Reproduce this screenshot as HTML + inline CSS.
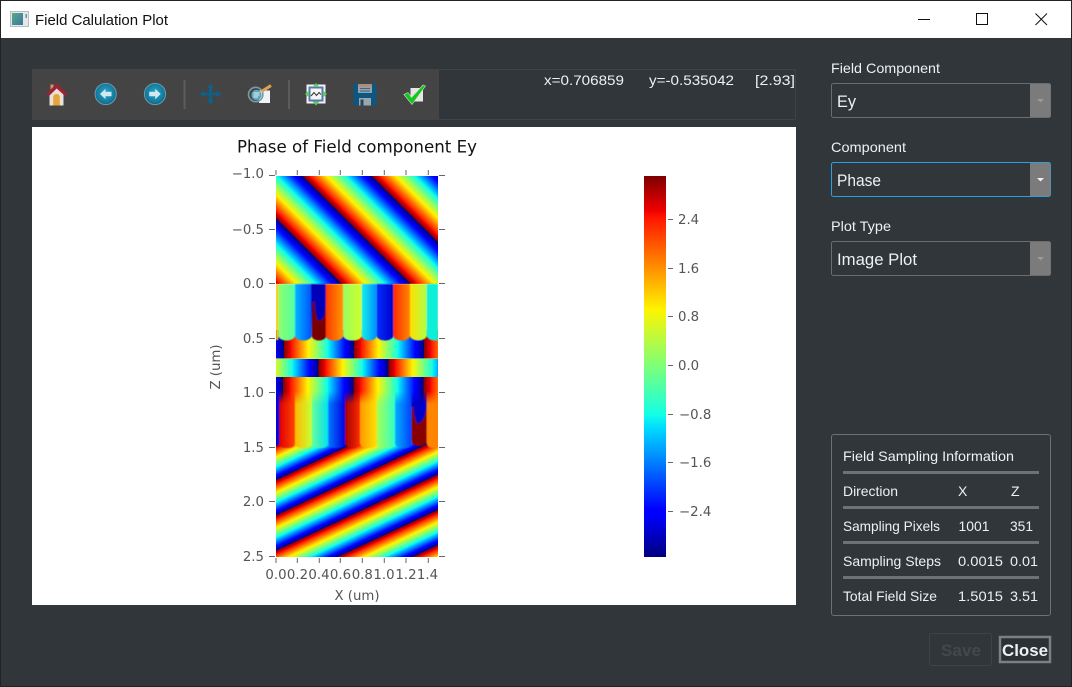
<!DOCTYPE html>
<html><head><meta charset="utf-8"><title>Field Calulation Plot</title>
<style>html,body{margin:0;padding:0;background:#31363b;overflow:hidden}svg{display:block}
.s{font-family:"Liberation Sans",sans-serif;fill:#eff0f1;font-size:14px}
.c{font-family:"Liberation Sans",sans-serif;fill:#eff0f1;font-size:16.5px}
</style></head><body>
<svg width="1072" height="687" viewBox="0 0 1072 687" xmlns="http://www.w3.org/2000/svg">
<defs>
<linearGradient id="jet" gradientUnits="userSpaceOnUse" spreadMethod="repeat" x1="0" y1="0" x2="70" y2="0">
<stop offset="0" stop-color="#7f0000"/><stop offset=".09" stop-color="#ee0000"/><stop offset=".11" stop-color="#ff1600"/><stop offset=".35" stop-color="#fff400"/><stop offset=".5" stop-color="#7cff79"/><stop offset=".625" stop-color="#14ffe5"/><stop offset=".66" stop-color="#00dcff"/><stop offset=".875" stop-color="#0000ff"/><stop offset=".89" stop-color="#0000ff"/><stop offset="1" stop-color="#00007f"/>
</linearGradient>
<linearGradient id="gTop" href="#jet" x1="302.7" y1="176" x2="337.2" y2="141.5"/>
<linearGradient id="gBot" href="#jet" x1="338.3" y1="556.7" x2="351.9" y2="585.6"/>
<linearGradient id="gB1" href="#jet" x1="284" y1="0" x2="354" y2="0"/>
<linearGradient id="gB2" href="#jet" x1="318.3" y1="0" x2="388.3" y2="0"/>
<linearGradient id="gB3" href="#jet" x1="283" y1="0" x2="353.3" y2="0"/>
<linearGradient id="gCb" href="#jet" spreadMethod="pad" x1="0" y1="176" x2="0" y2="557"/>
<linearGradient id="a1"><stop offset="0" stop-color="#90ff68"/><stop offset="1" stop-color="#50ffa8"/></linearGradient>
<linearGradient id="a2"><stop offset="0" stop-color="#00b8ff"/><stop offset="1" stop-color="#0050ff"/></linearGradient>
<linearGradient id="a4"><stop offset="0" stop-color="#ff3800"/><stop offset="1" stop-color="#ff9800"/></linearGradient>
<linearGradient id="a5"><stop offset="0" stop-color="#98ff60"/><stop offset="1" stop-color="#d0ff28"/></linearGradient>
<linearGradient id="a6"><stop offset="0" stop-color="#10f0e8"/><stop offset="1" stop-color="#0090ff"/></linearGradient>
<linearGradient id="a7"><stop offset="0" stop-color="#0030ff"/><stop offset="1" stop-color="#0000c8"/></linearGradient>
<linearGradient id="a8"><stop offset="0" stop-color="#ff2800"/><stop offset="1" stop-color="#ff8800"/></linearGradient>
<linearGradient id="a9"><stop offset="0" stop-color="#ffe000"/><stop offset="1" stop-color="#b0ff48"/></linearGradient>
<linearGradient id="b1"><stop offset="0" stop-color="#e00000"/><stop offset="1" stop-color="#ff4400"/></linearGradient>
<linearGradient id="b2"><stop offset="0" stop-color="#ffb800"/><stop offset="1" stop-color="#c8ff30"/></linearGradient>
<linearGradient id="b3"><stop offset="0" stop-color="#68ff98"/><stop offset="1" stop-color="#00e0f0"/></linearGradient>
<linearGradient id="b4"><stop offset="0" stop-color="#0078ff"/><stop offset="1" stop-color="#0000e0"/></linearGradient>
<linearGradient id="b5"><stop offset="0" stop-color="#a00000"/><stop offset="1" stop-color="#ff2c00"/></linearGradient>
<linearGradient id="b6"><stop offset="0" stop-color="#ff9800"/><stop offset="1" stop-color="#ffe000"/></linearGradient>
<linearGradient id="b7"><stop offset="0" stop-color="#a8ff50"/><stop offset="1" stop-color="#30ffc8"/></linearGradient>
<linearGradient id="b8"><stop offset="0" stop-color="#00b0ff"/><stop offset="1" stop-color="#0040ff"/></linearGradient>
<radialGradient id="ball" cx=".5" cy=".45" r=".55"><stop offset="0" stop-color="#2aa8c8"/><stop offset=".8" stop-color="#12799c"/><stop offset="1" stop-color="#0c6080"/></radialGradient>
<linearGradient id="ti" x1="0" y1="0" x2="1" y2="1"><stop offset="0" stop-color="#58a88a"/><stop offset="1" stop-color="#3a78a0"/></linearGradient>
<linearGradient id="fade" gradientUnits="userSpaceOnUse" x1="0" y1="391" x2="0" y2="404"><stop offset="0" stop-color="#000"/><stop offset="1" stop-color="#fff"/></linearGradient>
<mask id="mLow" maskUnits="userSpaceOnUse" x="270" y="380" width="175" height="80"><rect x="270" y="380" width="175" height="80" fill="url(#fade)"/></mask>
<clipPath id="im"><rect x="276" y="176" width="162" height="381"/></clipPath>
<clipPath id="cTop"><rect x="276" y="284" width="162" height="60"/></clipPath>
<filter id="bl" x="-5%" y="-5%" width="110%" height="110%"><feGaussianBlur stdDeviation="0.5"/></filter>
</defs>

<!-- window -->
<rect width="1072" height="687" fill="#31363b"/>
<rect x="0" y="1" width="1072" height="37" fill="#fff"/>
<rect x="0" y="0" width="1072" height="1" fill="#222"/>
<rect x="0" y="0" width="1" height="687" fill="#222"/>
<rect x="1071" y="0" width="1" height="687" fill="#222"/>
<rect x="0" y="686" width="1072" height="1" fill="#222"/>
<rect x="10.5" y="11.5" width="18" height="15" fill="#e4e8e8" stroke="#b8bec0"/>
<rect x="12" y="13" width="11" height="12" fill="url(#ti)"/>
<rect x="25.5" y="14" width="1.5" height="4" fill="#5a9aa0"/>
<text x="35" y="25" font-family="Liberation Sans,sans-serif" font-size="14.5" fill="#111" textLength="133" lengthAdjust="spacingAndGlyphs">Field Calulation Plot</text>
<path d="M918 19.5H930" stroke="#111" stroke-width="1"/>
<rect x="976.5" y="13.5" width="11" height="11" fill="none" stroke="#111"/>
<path d="M1035.5 13.5L1047 25M1047 13.5L1035.5 25" stroke="#111" stroke-width="1" fill="none"/>

<!-- toolbar -->
<rect x="32.5" y="69.5" width="763" height="50" fill="#31363b" stroke="#3e4347" rx="1"/>
<rect x="32" y="69" width="407" height="51" fill="#444"/>
<rect x="183.5" y="80" width="2" height="29" fill="#5c5c5c"/>
<rect x="288" y="80" width="2" height="29" fill="#5c5c5c"/>

<!-- home -->
<path d="M50.5 90V84.5H53.5V90Z" fill="#d89a50"/>
<path d="M49.5 93V105.5H63.5V93L56.5 86.5Z" fill="#e8e2d6"/>
<path d="M53.2 105.5V97.5Q53.2 94 56.5 94Q59.8 94 59.8 97.5V105.5Z" fill="#e5a53c"/>
<path d="M46 94.5L56.7 83.3L68 94.5L64.5 95.5L56.7 88.5L49.5 95.5Z" fill="#9c2238"/>
<!-- back/forward -->
<circle cx="105.7" cy="94" r="10.6" fill="url(#ball)" stroke="#6f9aa8" stroke-width="1"/>
<path d="M100 94L105.5 88.7V91.7H111.5V96.3H105.5V99.3Z" fill="#cfe8f2"/>
<circle cx="155" cy="94" r="10.6" fill="url(#ball)" stroke="#6f9aa8" stroke-width="1"/>
<path d="M160.7 94L155.2 88.7V91.7H149.2V96.3H155.2V99.3Z" fill="#cfe8f2"/>
<!-- move -->
<path d="M210.5 83.5L214 88H212V92.7H216.5V90.5L221 94L216.5 97.5V95.3H212V100H214L210.5 104.5L207 100H209V95.3H204.5V97.5L200 94L204.5 90.5V92.7H209V88H207Z" fill="#0f6088"/>
<!-- options -->
<rect x="259" y="90.5" width="11" height="12.5" fill="#f0f3f3"/>
<circle cx="255.7" cy="94.5" r="7.2" fill="none" stroke="#7b9aa5" stroke-width="1.6"/>
<circle cx="256.5" cy="95" r="5.2" fill="#5da6bc"/>
<path d="M253.5 93H259.5M253.5 95H259.5M253.5 97H258" stroke="#e6f2f5" stroke-width="1"/>
<path d="M261.5 91.5L271 85.5" stroke="#e0a050" stroke-width="3"/>
<!-- subplots -->
<rect x="306.5" y="84.5" width="19" height="19" fill="#f2f2f2"/>
<rect x="308.5" y="86.5" width="15" height="15" fill="#5878b4"/>
<rect x="310.5" y="88.5" width="11" height="11" fill="#f6f6f6"/>
<path d="M311 96L314 92.5L316.5 95.5L319 92.5L321 94.5" stroke="#333" fill="none" stroke-width="1"/>
<path d="M316 83L319.5 87H312.5ZM316 105.5L319.5 101.5H312.5ZM305 94L309 90.5V97.5ZM327 94L323 90.5V97.5Z" fill="#5fd060"/>
<!-- save -->
<rect x="353.5" y="83.5" width="23" height="22" rx="2" fill="#0e5680"/>
<rect x="358" y="84" width="14" height="2.5" fill="#b88a66"/>
<rect x="358" y="86.5" width="14" height="6.5" fill="#8ea2b0"/>
<path d="M360 88.5H370M360 91H370" stroke="#46667c" stroke-width="1"/>
<rect x="359" y="98" width="12" height="7.5" fill="#9aa6ae"/>
<rect x="360.5" y="99.5" width="3" height="6" fill="#244a62"/>
<!-- check -->
<rect x="410.5" y="88" width="12.5" height="13.5" fill="#e6e6e6"/>
<path d="M403.8 94.5L408 92.5L411.5 97.5L423 85L425.5 86L412 104.5Z" fill="#12c818" stroke="#d8d8d8" stroke-width=".6"/>

<text x="544" y="85" class="s" textLength="80" lengthAdjust="spacingAndGlyphs">x=0.706859</text>
<text x="649" y="85" class="s" textLength="85" lengthAdjust="spacingAndGlyphs">y=-0.535042</text>
<text x="755" y="85" class="s" textLength="40" lengthAdjust="spacingAndGlyphs">[2.93]</text>

<!-- plot -->
<rect x="32" y="127" width="764" height="478" fill="#fff"/>
<text x="237" y="152.5" font-family="DejaVu Sans,sans-serif" font-size="16.5" fill="#111" textLength="240" lengthAdjust="spacingAndGlyphs">Phase of Field component Ey</text>

<g clip-path="url(#im)">
<rect x="276" y="176" width="162" height="108" fill="url(#gTop)"/>
<rect x="276" y="440" width="162" height="117" fill="url(#gBot)"/>
<rect x="276" y="330" width="162" height="29" fill="url(#gB1)"/>
<rect x="276" y="359" width="162" height="18" fill="url(#gB2)"/>
<rect x="276" y="377" width="162" height="63" fill="url(#gB3)"/>
<rect x="276" y="358" width="162" height="1" fill="#b8ff80" opacity=".6"/>
<g filter="url(#bl)">
<g clip-path="url(#cTop)">
<rect x="268" y="260" width="10.3" height="80" fill="#ffc800"/>
<rect x="278.3" y="260" width="16.7" height="80.5" rx="8" ry="5" fill="url(#a1)"/>
<rect x="295" y="260" width="16.7" height="80.5" rx="8" ry="5" fill="url(#a2)"/>
<rect x="311.7" y="260" width="14.5" height="80.5" rx="7" ry="5" fill="#7a0000"/>
<path d="M311 280H326V302L324.5 316Q321 322 318 320Q315 316 314.8 302H312.5L311.5 338Z" fill="#0000b8"/>
<rect x="325.7" y="260" width="17.6" height="80.5" rx="8" ry="5" fill="url(#a4)"/>
<rect x="343.3" y="260" width="18.4" height="80.5" rx="8" ry="5" fill="url(#a5)"/>
<rect x="361.7" y="260" width="15" height="80.5" rx="7" ry="5" fill="url(#a6)"/>
<rect x="376.7" y="260" width="16.6" height="80.5" rx="8" ry="5" fill="url(#a7)"/>
<rect x="393.3" y="260" width="16.7" height="80.5" rx="8" ry="5" fill="url(#a8)"/>
<rect x="410" y="260" width="16.7" height="80.5" rx="8" ry="5" fill="url(#a9)"/>
<rect x="426.7" y="260" width="16.7" height="80.5" rx="8" ry="5" fill="#10f0d8"/>
</g>
<g mask="url(#mLow)">
<rect x="270" y="380" width="9.3" height="66" rx="3" fill="#0000d8"/>
<rect x="279.3" y="380" width="15.7" height="68" rx="6" ry="5" fill="url(#b1)"/>
<rect x="295" y="380" width="16.7" height="68" rx="6" ry="5" fill="url(#b2)"/>
<rect x="311.7" y="380" width="16.6" height="68" rx="6" ry="5" fill="url(#b3)"/>
<rect x="328.3" y="380" width="16.7" height="68" rx="6" ry="5" fill="url(#b4)"/>
<rect x="345" y="380" width="15" height="68" rx="6" ry="5" fill="url(#b5)"/>
<rect x="360" y="380" width="16.7" height="68" rx="6" ry="5" fill="url(#b6)"/>
<rect x="376.7" y="380" width="18.3" height="68" rx="6" ry="5" fill="url(#b7)"/>
<rect x="395" y="380" width="16.7" height="68" rx="6" ry="5" fill="url(#b8)"/>
<rect x="411.7" y="380" width="15" height="66" rx="6" ry="5" fill="#8a0000"/>
<path d="M411 380H427V407L424 418Q420 425 417 423Q414 418 413.5 407H411.5Z" fill="#0000c8"/>
<rect x="426.7" y="380" width="16" height="68" rx="5" fill="#ff8400"/>
</g>
</g>
</g>

<!-- ticks -->
<path d="M276 170V175M297.3 170V175M319.3 170V175M340.3 170V175M362.3 170V175M384.3 170V175M406 170V175M428.3 170V175M276 558V563M297.3 558V563M319.3 558V563M340.3 558V563M362.3 558V563M384.3 558V563M406 558V563M428.3 558V563" stroke="#666" stroke-width="1"/>
<path d="M269 175.5H275M269 229.5H275M269 283.5H275M269 338.5H275M269 392.5H275M269 447.5H275M269 501.5H275M269 556.5H275M439 175.5H445M439 229.5H445M439 283.5H445M439 338.5H445M439 392.5H445M439 447.5H445M439 501.5H445M439 556.5H445" stroke="#666" stroke-width="1"/>
<g text-anchor="end" style="font-family:'DejaVu Sans',sans-serif;font-size:13.3px;fill:#555">
<text x="264" y="178">−1.0</text><text x="264" y="234">−0.5</text><text x="264" y="288">0.0</text><text x="264" y="343">0.5</text><text x="264" y="397">1.0</text><text x="264" y="452">1.5</text><text x="264" y="506">2.0</text><text x="264" y="561">2.5</text>
</g>
<g text-anchor="middle" style="font-family:'DejaVu Sans',sans-serif;font-size:13.3px;fill:#555">
<text x="276" y="579">0.0</text><text x="297.5" y="579">0.2</text><text x="319" y="579">0.4</text><text x="340.5" y="579">0.6</text><text x="362.3" y="579">0.8</text><text x="384" y="579">1.0</text><text x="406" y="579">1.2</text><text x="427.5" y="579">1.4</text>
<text x="357" y="600">X (um)</text>
<text transform="translate(220,367) rotate(-90)">Z (um)</text>
</g>

<!-- colorbar -->
<rect x="644" y="176" width="22" height="381" fill="url(#gCb)"/>
<path d="M668 219.5H673M668 268.5H673M668 316.5H673M668 365.5H673M668 414.5H673M668 462.5H673M668 511.5H673" stroke="#666"/>
<g style="font-family:'DejaVu Sans',sans-serif;font-size:13.3px;fill:#555">
<text x="678" y="224">2.4</text><text x="678" y="273">1.6</text><text x="678" y="321">0.8</text><text x="678" y="370">0.0</text><text x="679" y="419">−0.8</text><text x="679" y="467">−1.6</text><text x="679" y="516">−2.4</text>
</g>

<!-- side panel -->
<text x="831" y="73" class="s" textLength="109" lengthAdjust="spacingAndGlyphs">Field Component</text>
<rect x="831.5" y="83.5" width="219" height="34" rx="2" fill="#31363b" stroke="#6a6e71"/>
<rect x="1030" y="84" width="20.5" height="33" fill="#7b7b7b"/>
<path d="M1037 99H1044L1040.5 102.5Z" fill="#9a9a9a"/>
<text x="837" y="107" class="c" textLength="19" lengthAdjust="spacingAndGlyphs">Ey</text>

<text x="831" y="152" class="s" textLength="75" lengthAdjust="spacingAndGlyphs">Component</text>
<rect x="831.5" y="162.5" width="219" height="34" rx="2" fill="#31363b" stroke="#2c9fe0"/>
<rect x="1030" y="163" width="20.5" height="33" fill="#7b7b7b"/>
<path d="M1037 178H1044L1040.5 181.5Z" fill="#f0f0f0"/>
<text x="837" y="186" class="c" textLength="44" lengthAdjust="spacingAndGlyphs">Phase</text>

<text x="831" y="231" class="s" textLength="60" lengthAdjust="spacingAndGlyphs">Plot Type</text>
<rect x="831.5" y="241.5" width="219" height="34" rx="2" fill="#31363b" stroke="#6a6e71"/>
<rect x="1030" y="242" width="20.5" height="33" fill="#7b7b7b"/>
<path d="M1037 257H1044L1040.5 260.5Z" fill="#9a9a9a"/>
<text x="837" y="265" class="c" textLength="80" lengthAdjust="spacingAndGlyphs">Image Plot</text>

<rect x="831.5" y="434.5" width="219" height="181" rx="2.5" fill="none" stroke="#6d7174"/>
<text x="843" y="461" class="s" textLength="171" lengthAdjust="spacingAndGlyphs">Field Sampling Information</text>
<rect x="843" y="471" width="196" height="3" fill="#6e7275"/>
<rect x="843" y="506" width="196" height="3" fill="#6e7275"/>
<rect x="843" y="541" width="196" height="3" fill="#6e7275"/>
<rect x="843" y="576" width="196" height="3" fill="#6e7275"/>
<text x="843" y="496" class="s" textLength="55" lengthAdjust="spacingAndGlyphs">Direction</text>
<text x="958" y="496" class="s">X</text><text x="1011" y="496" class="s">Z</text>
<text x="843" y="531" class="s" textLength="97" lengthAdjust="spacingAndGlyphs">Sampling Pixels</text>
<text x="958.5" y="531" class="s" textLength="31" lengthAdjust="spacingAndGlyphs">1001</text>
<text x="1010" y="531" class="s" textLength="23" lengthAdjust="spacingAndGlyphs">351</text>
<text x="843" y="566" class="s" textLength="98" lengthAdjust="spacingAndGlyphs">Sampling Steps</text>
<text x="958" y="566" class="s" textLength="45" lengthAdjust="spacingAndGlyphs">0.0015</text>
<text x="1010" y="566" class="s" textLength="28" lengthAdjust="spacingAndGlyphs">0.01</text>
<text x="843" y="601" class="s" textLength="94" lengthAdjust="spacingAndGlyphs">Total Field Size</text>
<text x="958" y="601" class="s" textLength="45" lengthAdjust="spacingAndGlyphs">1.5015</text>
<text x="1010" y="601" class="s" textLength="28" lengthAdjust="spacingAndGlyphs">3.51</text>

<!-- buttons -->
<rect x="929.5" y="633.5" width="62" height="32" rx="2" fill="none" stroke="#3e4347"/>
<text x="941" y="656" font-family="Liberation Sans,sans-serif" font-weight="bold" font-size="16.5" fill="#43484c" textLength="40" lengthAdjust="spacingAndGlyphs">Save</text>
<rect x="1000" y="637" width="50" height="25" fill="#2c3135" stroke="#7d8082" stroke-width="2.5"/>
<text x="1002" y="656" font-family="Liberation Sans,sans-serif" font-weight="bold" font-size="16.5" fill="#eff0f1" textLength="46" lengthAdjust="spacingAndGlyphs">Close</text>
</svg>
</body></html>
